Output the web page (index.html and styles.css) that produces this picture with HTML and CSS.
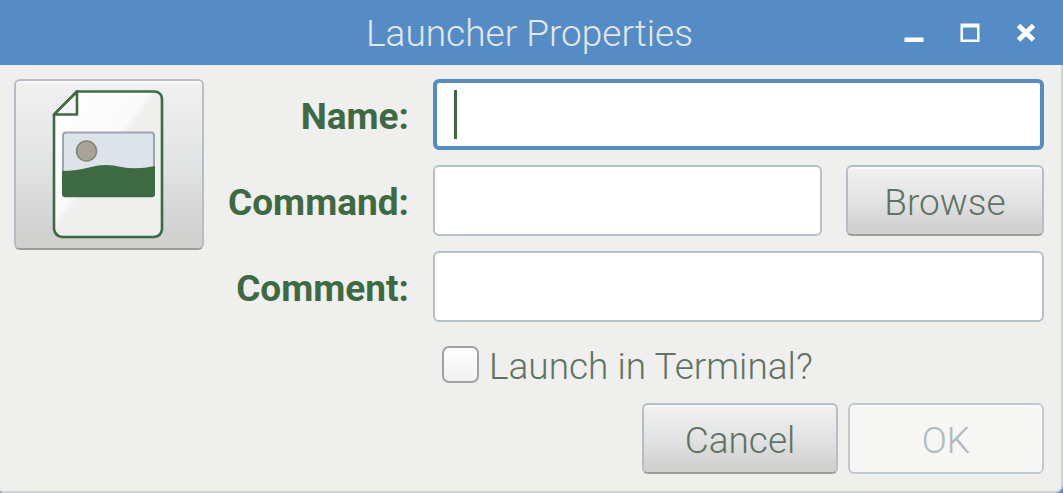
FILE: index.html
```html
<!DOCTYPE html>
<html lang="en">
<head>
<meta charset="utf-8">
<meta name="viewport" content="width=device-width, initial-scale=1">
<title>Launcher Properties</title>
<link rel="stylesheet" href="styles.css">
</head>
<body>
<main class="window">
  <header class="titlebar">
    <h1 class="title">Launcher Properties</h1>
    <div class="controls">
      <button class="control" type="button" aria-label="Minimize">
        <svg width="22" height="22" viewBox="0 0 22 22"><path d="M1.500 15.500h19v4.500h-19z" fill="#fff"/></svg>
      </button>
      <button class="control" type="button" aria-label="Maximize">
        <svg width="22" height="22" viewBox="0 0 22 22"><path d="M1.500 1.500h19v18.500h-19zM4 5.500v12h14v-12z" fill="#fff" fill-rule="evenodd"/></svg>
      </button>
      <button class="control" type="button" aria-label="Close">
        <svg width="22" height="22" viewBox="0 0 22 22"><path d="M3.500 3.500l15 14.500M18.500 3.500l-15 14.500" fill="none" stroke="#fff" stroke-width="5"/></svg>
      </button>
    </div>
  </header>
  <form class="content">
    <button class="button icon-button" type="button" aria-label="Choose icon">
      <svg width="114" height="150" viewBox="0 0 114 150">
        <defs>
          <linearGradient id="sheen" x1="0" y1="0" x2="1" y2="1">
            <stop offset="0" stop-color="#fff"/>
            <stop offset=".44" stop-color="#fafafa"/>
            <stop offset=".48" stop-color="#efefee"/>
            <stop offset="1" stop-color="#efefee"/>
          </linearGradient>
        </defs>
        <path d="M25 1.500h78q7 1 7 8v130q-1 7-8 7.500H10q-7-1-8-8V25z" fill="url(#sheen)" stroke="#3e6a43" stroke-width="2.600" stroke-linejoin="round"/>
        <path d="M25 1.500V24.500H2z" fill="#f4f4f3" stroke="#3e6a43" stroke-width="2.600" stroke-linejoin="round"/>
        <rect x="11" y="42.500" width="91" height="64" rx="3" fill="#dce3e9" stroke="#9aa6b2" stroke-width="2"/>
        <path d="M10 81q14 0 29-4 15-4 30 0 16 3 34-1v28q0 3-3 3H13q-3 0-3-3z" fill="#3e6a43"/>
        <circle cx="34.500" cy="61" r="10" fill="#a9a398" stroke="#7d8577" stroke-width="1.500"/>
      </svg>
    </button>
    <div class="fields">
      <label class="label" for="name">Name:</label>
      <div class="entry-focus"><input class="entry entry-active" id="name" type="text"></div>
      <label class="label" for="command">Command:</label>
      <div class="command-row">
        <input class="entry" id="command" type="text">
        <button class="button" type="button">Browse</button>
      </div>
      <label class="label" for="comment">Comment:</label>
      <input class="entry" id="comment" type="text">
      <div class="option">
        <input class="check" id="terminal" type="checkbox">
        <label for="terminal">Launch in Terminal?</label>
      </div>
    </div>
    <div class="actions">
      <button class="button" type="button">Cancel</button>
      <button class="button" type="submit" disabled>OK</button>
    </div>
  </form>
</main>
</body>
</html>
```
FILE: styles.css
```css
* {
  box-sizing: border-box;
}

body {
  margin: 0;
  background: #568cc5;
  color: #5f7363;
  font: 300 37px/48px Roboto, "Open Sans", sans-serif;
}

.window {
  display: flex;
  flex-direction: column;
  min-height: 100vh;
  background: #efefee;
  border: 0 solid #cfd2d4;
  border-width: 0 2px 2px 0;
  border-radius: 0 0 8px 3px;
}

.titlebar {
  display: grid;
  grid-template-columns: 1fr auto 1fr;
  align-items: center;
  height: 65px;
  padding: 0 26px 0 22px;
  background: #568cc5;
  margin-right: -2px;
}

.title {
  grid-column: 2;
  margin: 0;
  padding-top: 2px;
  color: #e3e8ec;
  font-size: 37px;
  font-weight: 300;
}

.controls {
  display: flex;
  justify-content: flex-end;
  gap: 34px;
}

.control {
  width: 22px;
  height: 22px;
  padding: 0;
  border: 0;
  background: none;
}

.control svg,
.icon-button svg {
  display: block;
}

.content {
  display: grid;
  grid-template-columns: 190px 1fr;
  column-gap: 16px;
  padding: 14px 17px 17px 14px;
}

.fields {
  display: grid;
  grid-template-columns: 189px 1fr;
  gap: 15px 24px;
  align-items: center;
}

.label {
  padding-top: 4px;
  color: #3e6a43;
  font-weight: 700;
  text-align: right;
}

.entry {
  display: block;
  width: 100%;
  min-width: 0;
  height: 71px;
  padding: 0 20px;
  border: 2px solid #b5c0c9;
  border-radius: 6px;
  outline: 0;
  background: #fff;
  color: #3e6a43;
  font: inherit;
}

.entry-focus {
  position: relative;
}

.entry-focus::after {
  content: "";
  position: absolute;
  top: 11px;
  left: 21px;
  width: 3px;
  height: 49px;
  background: #3e6a43;
}

.entry-active {
  border: 4px solid #568cc5;
}

.command-row {
  display: grid;
  grid-template-columns: 1fr 198px;
  gap: 24px;
}

.button {
  height: 71px;
  padding: 4px 0 0;
  border: 2px solid #b5bec6;
  border-bottom-color: #a09d98;
  border-radius: 6px;
  background: linear-gradient(#f1f1f1, #e2e3e4 50%, #d1d1d0 90%);
  box-shadow: inset 0 2px #fafafa;
  color: inherit;
  font: inherit;
}

.icon-button {
  display: grid;
  place-items: center;
  align-self: start;
  height: 171px;
  padding: 0;
}

.button:disabled {
  border-color: #c2c9ce;
  background: #f6f6f5;
  color: #b0b9be;
}

.option {
  grid-column: 2;
  display: flex;
  align-items: center;
  gap: 10px;
  padding-left: 9px;
}

.option label {
  padding-top: 6px;
}

.check {
  appearance: none;
  width: 37px;
  height: 37px;
  margin: 0;
  border: 2px solid #9da3a4;
  border-radius: 7px;
  background: linear-gradient(#fff, #f1f1f0);
}

.actions {
  grid-column: 1 / -1;
  display: grid;
  grid-template-columns: 196px 196px;
  justify-content: end;
  gap: 10px;
  padding-top: 12px;
}
```
